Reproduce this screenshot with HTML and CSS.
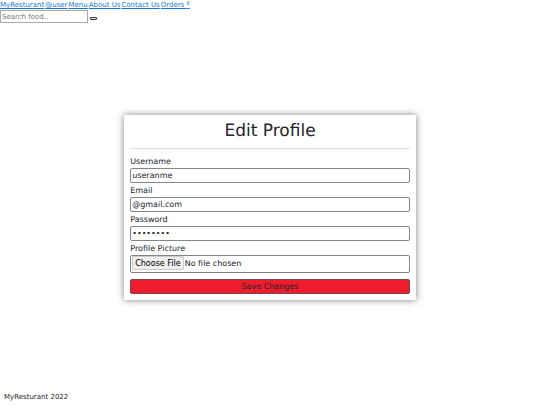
FILE: index.html
```html
<!DOCTYPE html>
<html lang="en">
<head>
    <meta charset="UTF-8">
    <meta name="viewport" content="width=device-width, initial-scale=1.0">
    <title>Edit Profile</title>
    <link rel="stylesheet" href="styles.css">
</head>
<body>
    <header>
        <nav>
            <a href="#">MyResturant</a>
            <a href="#">@user</a>
            <a href="#">Menu</a>
            <a href="#">About Us</a>
            <a href="#">Contact Us</a>
            <a href="#">Orders <sup>6</sup></a>
        </nav>
        <form class="search">
            <input type="search" placeholder="Search food.." aria-label="Search food">
            <button type="submit" aria-label="Search"></button>
        </form>
    </header>

    <main>
        <form class="card">
            <h1>Edit Profile</h1>
            <hr>
            <label for="username">Username</label>
            <input type="text" id="username" value="useranme">
            <label for="email">Email</label>
            <input type="email" id="email" value="@gmail.com">
            <label for="password">Password</label>
            <input type="password" id="password" value="password">
            <label for="picture">Profile Picture</label>
            <input type="file" id="picture">
            <button type="submit">Save Changes</button>
        </form>
    </main>

    <footer>MyResturant 2022</footer>
</body>
</html>
```

FILE: styles.css
```css
* {
    box-sizing: border-box;
}
body {
    display: flex;
    flex-direction: column;
    min-height: 100vh;
    margin: 0;
    font-family: "DejaVu Sans", sans-serif;
    font-size: 7px;
    color: #212529;
    background-color: white;
    text-rendering: geometricPrecision;
}
input,
button {
    margin: 0;
    font-family: inherit;
    text-rendering: inherit;
}
nav {
    display: flex;
    gap: 1px;
    line-height: 10px;
}
nav a {
    color: #1677d2;
}
nav sup {
    font-size: 5px;
    line-height: 0;
    vertical-align: 2px;
}
.search {
    display: flex;
    align-items: center;
    gap: 2px;
}
.search input {
    width: 88px;
    height: 13px;
    padding: 0 1px;
    border: 1px solid #aaa;
    font-size: 7px;
    appearance: none;
}
.search input::placeholder {
    color: #757575;
}
.search button {
    width: 7px;
    height: 3px;
    margin-top: 4px;
    padding: 0;
    border: 1px solid #333;
    border-radius: 1px;
    background-color: #efefef;
}
main {
    flex: 1;
    display: flex;
    align-items: center;
    justify-content: center;
    padding-top: 3px;
}
.card {
    display: flex;
    flex-direction: column;
    width: 54%;
    padding: 6px;
    background-color: white;
    box-shadow: 0 0 7px rgba(0, 0, 0, 0.5);
}
h1 {
    margin: 0;
    font-size: 17px;
    font-weight: normal;
    line-height: 20px;
    text-align: center;
}
hr {
    width: 100%;
    height: 1px;
    margin: 7px 0;
    border: 0;
    background-color: #ddd;
}
.card label {
    font-size: 8px;
    line-height: 12px;
}
.card input {
    width: 100%;
    height: 15px;
    margin-bottom: 2px;
    padding: 0 1px;
    border: 1px solid #858585;
    border-radius: 2px;
    font-size: 8px;
    color: #212529;
    background-color: white;
}
.card input[type="file"] {
    height: 18px;
    margin-bottom: 6px;
    line-height: 16px;
}
.card input::file-selector-button {
    height: 14px;
    margin: 0 1px 0 0;
    padding: 0 2px;
    border: 1px solid #ccc;
    border-radius: 1px;
    font-family: inherit;
    font-size: 8px;
    background-color: #efefef;
}
.card button {
    height: 15px;
    padding: 0;
    border: 1px solid #6b4a50;
    border-radius: 2px;
    font-size: 8px;
    color: #212529;
    background-color: #ee1c2c;
}
footer {
    padding: 4px 4px 3px;
    line-height: 10px;
}
```
